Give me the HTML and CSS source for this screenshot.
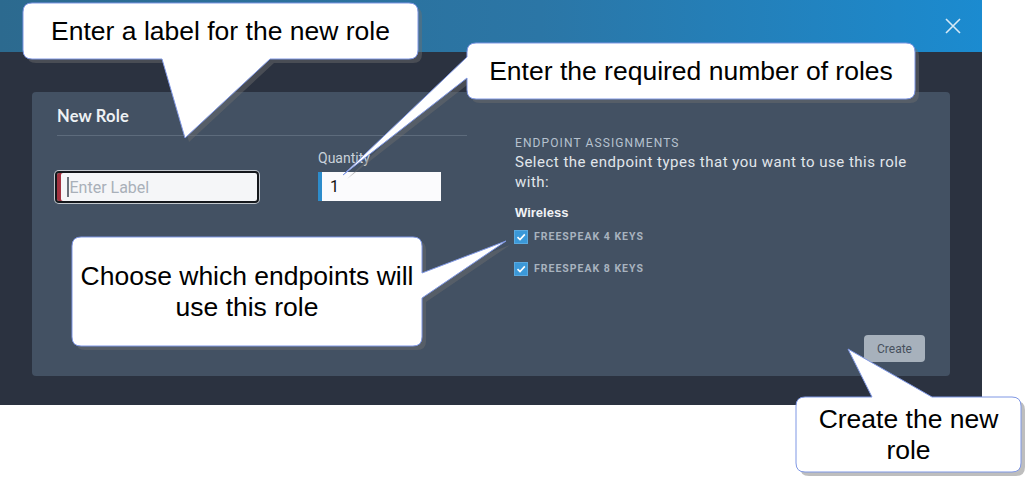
FILE: index.html
```html
<!DOCTYPE html>
<html lang="en">
<head>
<meta charset="UTF-8">
<title>New Role</title>
<meta name="viewport" content="width=device-width, initial-scale=1">
<link rel="stylesheet" href="styles.css">
</head>
<body>

<div class="app">

<div class="topbar">
<svg class="close" width="16" height="16" viewBox="0 0 16 16"><path d="M1 1L15 15M15 1L1 15" stroke="#d6e9f6" stroke-width="1.6" fill="none"/></svg>
</div>

<div class="main">
<div class="card">

<div class="left">
<div class="title">New Role</div>
<div class="fields">
<div class="txt label-in"><span class="caret"></span><span class="ph">Enter Label</span></div>
<div class="qty-field">
<div class="flabel">Quantity</div>
<div class="txt qty">1</div>
</div>
</div>
</div>

<div class="right">
<div class="caps">ENDPOINT ASSIGNMENTS</div>
<div class="desc">Select the endpoint types that you want to use this role with:</div>
<div class="group">Wireless</div>
<div class="check first"><span class="box"><svg width="12" height="12" viewBox="0 0 12 12"><path d="M2.5 6.2L5 8.6L9.8 3.4" stroke="#fff" stroke-width="1.6" fill="none"/></svg></span>FREESPEAK 4 KEYS</div>
<div class="check"><span class="box"><svg width="12" height="12" viewBox="0 0 12 12"><path d="M2.5 6.2L5 8.6L9.8 3.4" stroke="#fff" stroke-width="1.6" fill="none"/></svg></span>FREESPEAK 8 KEYS</div>
<div class="create">Create</div>
</div>

</div>
</div>

</div>

<!-- callouts -->
<svg class="shapes" width="1035" height="486" viewBox="0 0 1035 486">
<g fill="rgba(110,110,110,0.45)" transform="translate(4,4)">
<path d="M32 3H409Q418 3 418 12V50Q418 59 409 59H270L185 138L162 59H32Q23 59 23 50V12Q23 3 32 3Z"/>
<path d="M476 43H906Q915 43 915 52V90Q915 99 906 99H476Q467 99 467 90V78L343 175L467 57V52Q467 43 476 43Z"/>
<path d="M81 237H413Q422 237 422 246V273L506 241L422 298V337Q422 346 413 346H81Q72 346 72 337V246Q72 237 81 237Z"/>
<path d="M805 397H872L848 349L932 397H1012Q1021 397 1021 406V463Q1021 472 1012 472H805Q796 472 796 463V406Q796 397 805 397Z"/>
</g>
<g fill="#fff" stroke="#7f97e4" stroke-width="1">
<path d="M32 3H409Q418 3 418 12V50Q418 59 409 59H270L185 138L162 59H32Q23 59 23 50V12Q23 3 32 3Z"/>
<path d="M476 43H906Q915 43 915 52V90Q915 99 906 99H476Q467 99 467 90V78L343 175L467 57V52Q467 43 476 43Z"/>
<path d="M81 237H413Q422 237 422 246V273L506 241L422 298V337Q422 346 413 346H81Q72 346 72 337V246Q72 237 81 237Z"/>
<path d="M805 397H872L848 349L932 397H1012Q1021 397 1021 406V463Q1021 472 1012 472H805Q796 472 796 463V406Q796 397 805 397Z"/>
</g>
</svg>

<div class="callout c1">Enter a label for the new role</div>
<div class="callout c2">Enter the required number of roles</div>
<div class="callout c3">Choose which endpoints will<br>use this role</div>
<div class="callout c4">Create the new<br>role</div>

</body>
</html>
```

FILE: styles.css
```css
body{
margin:0;
background:#fff;
font-family:Roboto,"Liberation Sans",sans-serif;
}

.app{
width:982px;
height:405px;
}

.topbar{
height:52px;
background:linear-gradient(90deg,#2c6a8f 0%,#2b76a6 55%,#1b8bd0 100%);
display:flex;
justify-content:flex-end;
align-items:center;
padding-right:21px;
}

.main{
background:#2b3240;
height:353px;
padding:40px 32px 0;
box-sizing:border-box;
}

.card{
background:#435163;
height:284px;
border-radius:4px;
padding:14px 25px;
box-sizing:border-box;
display:flex;
}

.left{width:410px}

.title{
font-family:Lato,"Liberation Sans",sans-serif;
font-weight:700;
font-size:16.5px;
line-height:20px;
letter-spacing:0.2px;
color:#eef1f4;
padding-bottom:9px;
border-bottom:1px solid #5d6b7c;
}

.fields{
display:flex;
margin-top:14px;
}

.txt{
box-sizing:border-box;
display:flex;
align-items:center;
}

.label-in{
margin-top:21px;
margin-left:-2px;
width:204px;
height:32px;
border:2px solid #15181c;
border-radius:4px;
box-shadow:0 0 0 1px #c3c8ce, inset 4px 0 0 #a2313f;
background:#f5f6f8;
padding-left:10px;
}

.caret{
width:1.5px;
height:20px;
background:#6a717a;
margin-right:1px;
}

.ph{
font-size:16px;
color:#a9b0b9;
}

.qty-field{margin-left:59px}

.flabel{
font-size:14px;
line-height:16px;
color:#c9d1da;
}

.qty{
margin-top:6px;
width:123px;
height:29px;
background:#fbfbfd;
box-shadow:inset 4px 0 0 #2d8ccb;
padding-left:12px;
font-size:16px;
color:#111;
}

.right{
flex:1;
margin-left:48px;
padding-top:31px;
display:flex;
flex-direction:column;
align-items:flex-start;
}

.caps{
font-size:12px;
line-height:12px;
letter-spacing:1.1px;
color:#b6c2cf;
}

.desc{
margin-top:3px;
width:400px;
font-size:15px;
line-height:20px;
letter-spacing:0.5px;
color:#e1e6eb;
}

.group{
margin-top:13px;
font-family:"Liberation Sans",Arial,sans-serif;
font-weight:700;
font-size:13px;
line-height:16px;
color:#f1f3f6;
}

.check{
margin-top:16px;
display:flex;
align-items:center;
font-size:10.5px;
line-height:16px;
font-weight:700;
letter-spacing:1px;
color:#a8b3bf;
}

.check.first{margin-top:8px}

.box{
width:12px;
height:12px;
background:#3b98d8;
box-shadow:0 0 0 1px #5aa9df;
margin-right:7px;
display:flex;
}

.create{
margin-top:auto;
align-self:flex-end;
width:61px;
height:27px;
border-radius:4px;
background:#a7b1bc;
color:#46505c;
font-size:12px;
display:flex;
align-items:center;
justify-content:center;
}

.shapes{
position:absolute;
left:0;
top:0;
pointer-events:none;
}

.callout{
position:absolute;
display:flex;
align-items:center;
justify-content:center;
text-align:center;
font-family:"Liberation Sans",Arial,sans-serif;
font-size:26.5px;
line-height:31px;
color:#000;
}

.c1{left:23px;top:3px;width:395px;height:56px}
.c2{left:467px;top:43px;width:448px;height:56px}
.c3{left:72px;top:237px;width:350px;height:109px}
.c4{left:796px;top:397px;width:225px;height:75px}
```
